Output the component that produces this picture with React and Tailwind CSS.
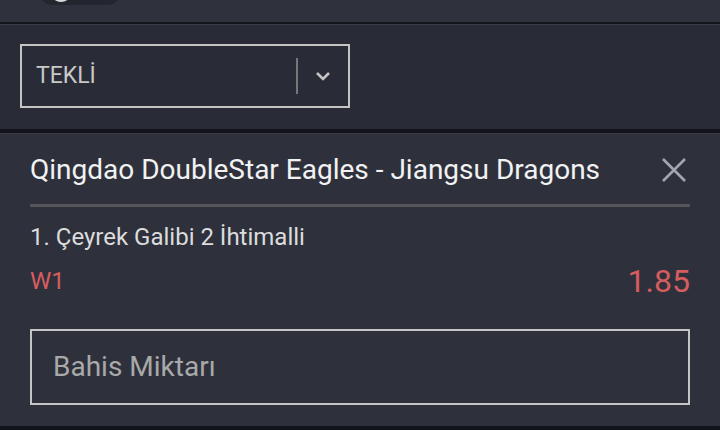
import React from "react";

export default function App() {
  const font = { fontFamily: "Roboto, 'Noto Sans', sans-serif" };
  return (
    <div className="w-[720px] h-[430px] overflow-hidden bg-[#2e313c]" style={font}>
      {/* top strip */}
      <div className="h-[22px] bg-[#2f323d] overflow-hidden">
        <div className="ml-[38px] -mt-[26px] w-[84px] h-[31px] rounded-full bg-[#23262f] flex items-start">
          <div className="ml-[12px] mt-[4px] w-[22px] h-[24px] rounded-full bg-[#d9d9d9]" />
        </div>
      </div>
      <div className="h-[2px] bg-[#13141c]" />
      <div className="h-[1px] bg-[#3a3d48]" />
      {/* select section */}
      <div className="bg-[#292c36] pt-[19px] pb-[21px] px-[20px]">
        <div className="w-[330px] h-[64px] border-2 border-[#c4c4c4] flex items-center">
          <span className="pl-[14px] text-[23px] text-[#c9c9c9] flex-1">TEKLİ</span>
          <div className="w-[2px] h-[36px] bg-[#787878]" />
          <div className="w-[50px] flex items-center justify-center">
            <svg width="16" height="10" viewBox="0 0 16 10">
              <path d="M2 2 L8 8 L14 2" fill="none" stroke="#c4c4c4" strokeWidth="2.6" />
            </svg>
          </div>
        </div>
      </div>
      <div className="h-[4px] bg-[#12131b]" />
      <div className="h-[1px] bg-[#393c47]" />
      {/* bet slip */}
      <div className="px-[30px] h-[292px] bg-[#2e313c]">
        <div className="flex items-center justify-between h-[70px] pt-[2px]">
          <span className="text-[28px] text-[#f2f2f2]">Qingdao DoubleStar Eagles - Jiangsu Dragons</span>
          <svg width="28" height="28" viewBox="0 0 28 28" className="mr-[2px]">
            <path d="M3 3 L25 25 M25 3 L3 25" stroke="#a3a6ad" strokeWidth="2.6" />
          </svg>
        </div>
        <div className="h-[3px] bg-[#55565b]" />
        <div className="pt-[16px] text-[24px] text-[#dcdcdc] leading-[28px]">1. Çeyrek Galibi 2 İhtimalli</div>
        <div className="flex items-center justify-between mt-[12px] h-[36px]">
          <span className="text-[24px] text-[#d65d5f] leading-[28px]">W1</span>
          <span className="text-[32px] text-[#d65d5f] leading-[36px]">1.85</span>
        </div>
        <div className="mt-[30px] h-[76px] border-2 border-[#c4c4c4] flex items-center">
          <span className="pl-[21px] text-[28px] text-[#a9a9a9]">Bahis Miktarı</span>
        </div>
      </div>
      <div className="h-[4px] bg-[#12141c]" />
    </div>
  );
}
